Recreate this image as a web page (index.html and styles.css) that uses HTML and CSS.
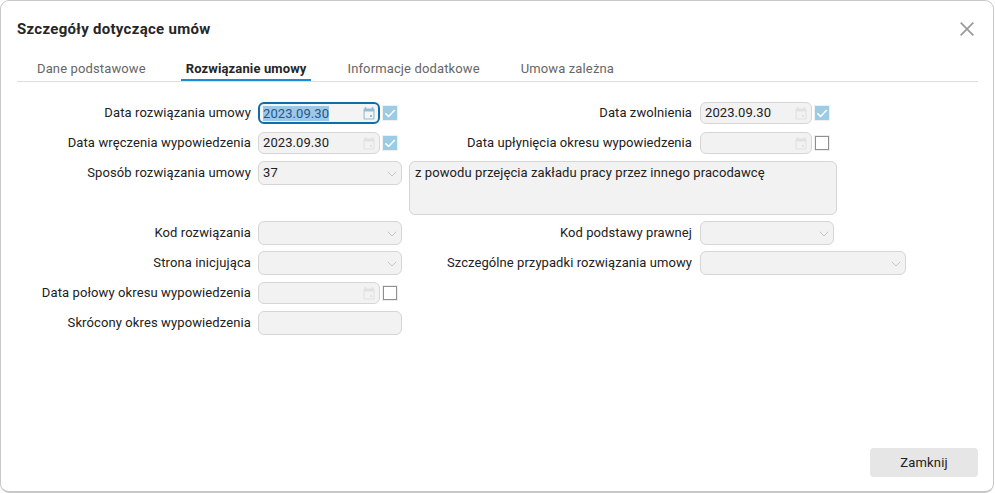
FILE: index.html
```html
<!DOCTYPE html>
<html lang="pl">
<head>
  <meta charset="UTF-8">
  <title>Szczegóły dotyczące umów</title>
  <link rel="stylesheet" href="styles.css">
</head>
<body>
  <svg class="defs" width="0" height="0">
    <symbol id="cal" viewBox="0 0 12 13">
      <path d="M2.5 0v2M9.5 0v2" stroke="currentColor" stroke-width="1.4" fill="none"/>
      <path d="M1.5 1.5h9a1 1 0 0 1 1 1v9a1 1 0 0 1-1 1h-9a1 1 0 0 1-1-1v-9a1 1 0 0 1 1-1zM1.6 4.6v6.8h8.8V4.6z" fill="currentColor" fill-rule="evenodd"/>
      <rect x="7" y="8" width="2" height="2" fill="currentColor"/>
    </symbol>
    <symbol id="chev" viewBox="0 0 10 6">
      <path d="M.7.7 5 5l4.3-4.3" stroke="currentColor" stroke-width="1" fill="none"/>
    </symbol>
  </svg>

  <div class="dialog">
    <div class="head">
      <h1>Szczegóły dotyczące umów</h1>
      <svg class="close" viewBox="0 0 14 14"><path d="M.7.7l12.6 12.6M13.3.7.7 13.3" stroke="#9a9a9a" stroke-width="1.7" fill="none"/></svg>
    </div>

    <ul class="tabs">
      <li>Dane podstawowe</li>
      <li class="active">Rozwiązanie umowy</li>
      <li>Informacje dodatkowe</li>
      <li>Umowa zależna</li>
    </ul>

    <div class="form">
      <label>Data rozwiązania umowy</label>
      <div class="with-check">
        <div class="field date focus"><span class="sel">2023.09.30</span><svg class="cal"><use href="#cal"/></svg></div>
        <span class="check on"><svg viewBox="0 0 14 14"><path d="M2.4 7.4l3.2 3L11.8 4" stroke="#fff" stroke-width="1.5" fill="none"/></svg></span>
      </div>
      <label class="lbl-r">Data zwolnienia</label>
      <div class="with-check">
        <div class="field date short">2023.09.30<svg class="cal"><use href="#cal"/></svg></div>
        <span class="check on"><svg viewBox="0 0 14 14"><path d="M2.4 7.4l3.2 3L11.8 4" stroke="#fff" stroke-width="1.5" fill="none"/></svg></span>
      </div>

      <label>Data wręczenia wypowiedzenia</label>
      <div class="with-check">
        <div class="field date">2023.09.30<svg class="cal"><use href="#cal"/></svg></div>
        <span class="check on"><svg viewBox="0 0 14 14"><path d="M2.4 7.4l3.2 3L11.8 4" stroke="#fff" stroke-width="1.5" fill="none"/></svg></span>
      </div>
      <label class="lbl-r">Data upłynięcia okresu wypowiedzenia</label>
      <div class="with-check">
        <div class="field date short"><svg class="cal"><use href="#cal"/></svg></div>
        <span class="check"></span>
      </div>

      <label>Sposób rozwiązania umowy</label>
      <div class="field select">37<svg class="chev"><use href="#chev"/></svg></div>
      <div class="field memo">z powodu przejęcia zakładu pracy przez innego pracodawcę</div>
      <div class="spacer"></div>

      <label>Kod rozwiązania</label>
      <div class="field select"><svg class="chev"><use href="#chev"/></svg></div>
      <label class="lbl-r">Kod podstawy prawnej</label>
      <div class="field select w-134"><svg class="chev"><use href="#chev"/></svg></div>

      <label>Strona inicjująca</label>
      <div class="field select"><svg class="chev"><use href="#chev"/></svg></div>
      <label class="lbl-r">Szczególne przypadki rozwiązania umowy</label>
      <div class="field select w-206"><svg class="chev"><use href="#chev"/></svg></div>

      <label>Data połowy okresu wypowiedzenia</label>
      <div class="with-check span-3">
        <div class="field date"><svg class="cal"><use href="#cal"/></svg></div>
        <span class="check"></span>
      </div>

      <label>Skrócony okres wypowiedzenia</label>
      <div class="field"></div>
    </div>

    <div class="foot">
      <button>Zamknij</button>
    </div>
  </div>
</body>
</html>
```

FILE: styles.css
```css
*{
  margin: 0;
  padding: 0;
  box-sizing: border-box;
  list-style: none;
}
html,body{
  height: 100%;
  overflow: hidden;
}
body{
  background: #fff;
  font-family: Roboto, "Liberation Sans", sans-serif;
  font-size: 13px;
  color: #212121;
}
.defs{
  position: absolute;
}
.dialog{
  width: 994px;
  height: 493px;
  border: 1px solid #c8c8c8;
  border-width: 1px 1px 2px 1px;
  border-radius: 9px;
  background: #fff;
  padding: 0 16px;
  display: flex;
  flex-direction: column;
}
.head{
  height: 50px;
  display: flex;
  align-items: center;
  justify-content: space-between;
  width: 957px;
  padding-top: 5px;
}
.head h1{
  font-size: 15px;
  font-weight: 700;
  letter-spacing: .29px;
  color: #262626;
}
.close{
  width: 14px;
  height: 14px;
  margin-top: 1px;
}
.tabs{
  display: flex;
  gap: 31px;
  padding-left: 15px;
  height: 31px;
  width: 961px;
  border-bottom: 1px solid #dedede;
}
.tabs li{
  padding: 10px 5px 0;
  letter-spacing: .13px;
  color: #666;
  height: 30px;
}
.tabs li:first-child{
  margin-right: -1px;
}
.tabs .active{
  font-weight: 700;
  letter-spacing: .12px;
  color: #262626;
  border-bottom: 2px solid #1a8cd8;
}
.form{
  margin-top: 19px;
  display: grid;
  grid-template-columns: 234px 144px 284px 1fr;
  grid-auto-rows: 24px;
  column-gap: 7px;
  row-gap: 6px;
}
.form label{
  text-align: right;
  line-height: 24px;
  letter-spacing: .11px;
  white-space: nowrap;
}
.form .lbl-r{
  padding-right: 1px;
  letter-spacing: .07px;
}
.spacer{
  grid-column: 1 / span 2;
}
.field{
  position: relative;
  height: 24px;
  width: 144px;
  background: #f2f2f2;
  border: 1px solid #d6d6d6;
  border-radius: 6px;
  padding-left: 4px;
  line-height: 22px;
  letter-spacing: .08px;
}
.with-check{
  display: flex;
  align-items: center;
  gap: 3px;
}
.span-3{
  grid-column: 2 / span 3;
}
.date{
  width: 122px;
  height: 22px;
  line-height: 20px;
}
.date.short{
  width: 112px;
}
.focus{
  border: 2px solid #0f6ea6;
  background: #f4f4f4;
  padding-left: 3px;
}
.sel{
  background: #9cc8ec;
  color: #28577f;
}
.cal{
  position: absolute;
  right: 4px;
  top: 4px;
  width: 12px;
  height: 13px;
  color: #e1e1e1;
}
.focus .cal{
  right: 3px;
  top: 3px;
  color: #93bdd4;
}
.chev{
  position: absolute;
  right: 4px;
  top: 9px;
  width: 10px;
  height: 6px;
  color: #c6c6c6;
}
.select.w-134{
  width: 134px;
}
.select.w-206{
  width: 206px;
}
.memo{
  grid-column: 3 / span 2;
  grid-row: span 2;
  width: 428px;
  height: 54px;
  padding: 2px 5px;
  line-height: 18px;
}
.check{
  width: 14px;
  height: 14px;
  border: 1px solid #8f8f8f;
  background: #fff;
  outline: 1px solid #ededed;
}
.check.on{
  background: #9bcbe5;
  border: 0;
  outline-color: #f0f0f0;
}
.check svg{
  display: block;
  width: 14px;
  height: 14px;
}
.foot{
  margin-top: auto;
  padding: 0 0 14px;
  display: flex;
  justify-content: flex-end;
  width: 961px;
}
.foot button{
  width: 108px;
  height: 29px;
  border: 0;
  border-radius: 4px;
  background: #e6e6e6;
  font: inherit;
  letter-spacing: .2px;
  color: #212121;
}
```
